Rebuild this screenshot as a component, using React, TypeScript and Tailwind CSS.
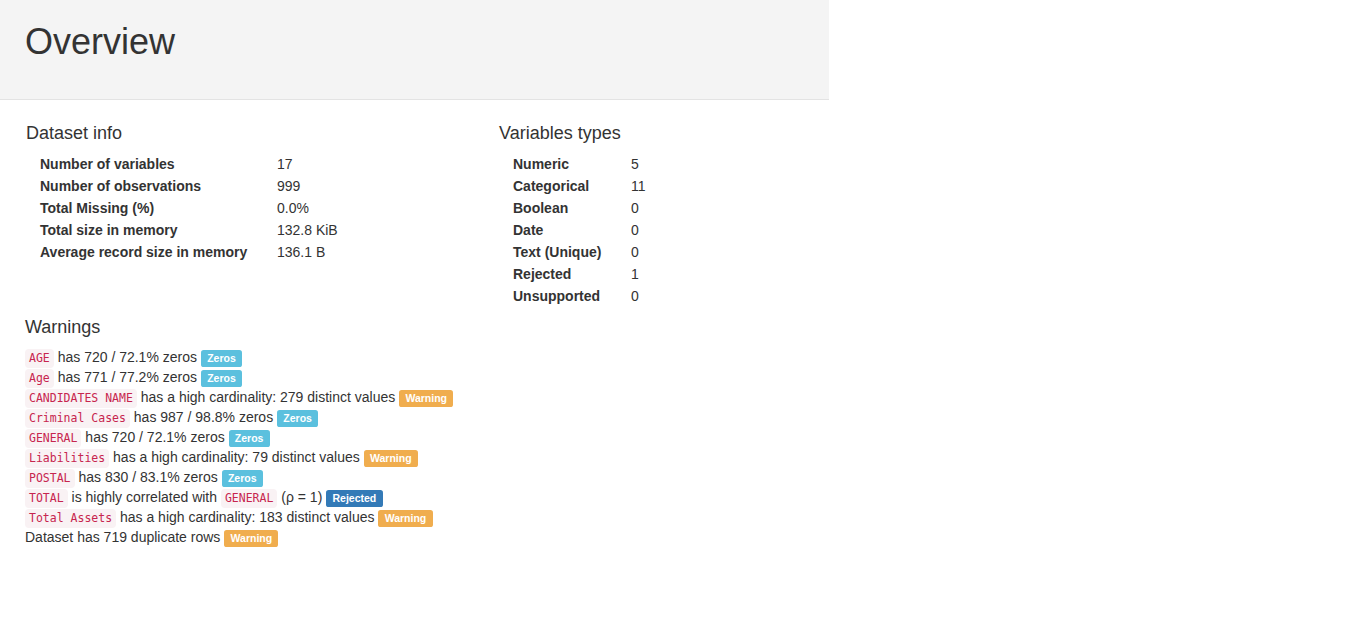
import React from 'react';

type Row = { label: string; value: string };

const datasetInfo: Row[] = [
  { label: 'Number of variables', value: '17' },
  { label: 'Number of observations', value: '999' },
  { label: 'Total Missing (%)', value: '0.0%' },
  { label: 'Total size in memory', value: '132.8 KiB' },
  { label: 'Average record size in memory', value: '136.1 B' },
];

const variableTypes: Row[] = [
  { label: 'Numeric', value: '5' },
  { label: 'Categorical', value: '11' },
  { label: 'Boolean', value: '0' },
  { label: 'Date', value: '0' },
  { label: 'Text (Unique)', value: '0' },
  { label: 'Rejected', value: '1' },
  { label: 'Unsupported', value: '0' },
];

function Code({ children }: { children: React.ReactNode }) {
  return (
    <code className="rounded-[4px] bg-[#f9f2f4] px-[4px] pt-[2px] pb-[3px] font-['DejaVu_Sans_Mono','Liberation_Mono',monospace] text-[11.5px] leading-none text-[#c7254e]">
      {children}
    </code>
  );
}

function Label({ kind }: { kind: 'Zeros' | 'Warning' | 'Rejected' }) {
  const colour =
    kind === 'Zeros' ? 'bg-[#5bc0de]' : kind === 'Warning' ? 'bg-[#f0ad4e]' : 'bg-[#337ab7]';
  return (
    <span
      className={`${colour} inline rounded-[.25em] px-[.6em] pt-[.2em] pb-[.3em] align-baseline text-[10.5px] font-bold leading-none text-white`}
    >
      {kind}
    </span>
  );
}

function InfoTable({ rows, labelWidth }: { rows: Row[]; labelWidth: string }) {
  return (
    <div className="mt-[10px] pl-[14px]">
      {rows.map((r) => (
        <div key={r.label} className="flex h-[22px] items-center leading-[22px]">
          <div className={`${labelWidth} font-bold`}>{r.label}</div>
          <div>{r.value}</div>
        </div>
      ))}
    </div>
  );
}

export default function App() {
  return (
    <div className="min-h-screen bg-white font-['Liberation_Sans',Arial,sans-serif] text-[14px] leading-[20px] text-[#333]">
      {/* header */}
      <div className="h-[100px] w-[829px] border-b border-[#e3e3e3] bg-[#f4f4f4] pl-[25px] pt-[22px]">
        <h1 className="text-[36px] leading-[40px]">Overview</h1>
      </div>

      <div className="pl-[25px]">
        <div className="mt-[23px] flex">
          <div className="w-[474px] pl-[1px]">
            <h3 className="text-[18px] leading-[20px]">Dataset info</h3>
            <InfoTable rows={datasetInfo} labelWidth="w-[237px]" />
          </div>
          <div>
            <h3 className="text-[18px] leading-[20px]">Variables types</h3>
            <InfoTable rows={variableTypes} labelWidth="w-[118px]" />
          </div>
        </div>

        <h3 className="mt-[10px] text-[18px] leading-[20px]">Warnings</h3>
        <ul className="mt-[10px] [&>li]:h-[20px] [&>li]:whitespace-nowrap">
          <li>
            <Code>AGE</Code> has 720 / 72.1% zeros <Label kind="Zeros" />
          </li>
          <li>
            <Code>Age</Code> has 771 / 77.2% zeros <Label kind="Zeros" />
          </li>
          <li>
            <Code>CANDIDATES NAME</Code> has a high cardinality: 279 distinct values <Label kind="Warning" />
          </li>
          <li>
            <Code>Criminal Cases</Code> has 987 / 98.8% zeros <Label kind="Zeros" />
          </li>
          <li>
            <Code>GENERAL</Code> has 720 / 72.1% zeros <Label kind="Zeros" />
          </li>
          <li>
            <Code>Liabilities</Code> has a high cardinality: 79 distinct values <Label kind="Warning" />
          </li>
          <li>
            <Code>POSTAL</Code> has 830 / 83.1% zeros <Label kind="Zeros" />
          </li>
          <li>
            <Code>TOTAL</Code> is highly correlated with <Code>GENERAL</Code> (ρ = 1) <Label kind="Rejected" />
          </li>
          <li>
            <Code>Total Assets</Code> has a high cardinality: 183 distinct values <Label kind="Warning" />
          </li>
          <li>
            Dataset has 719 duplicate rows <Label kind="Warning" />
          </li>
        </ul>
      </div>
    </div>
  );
}
